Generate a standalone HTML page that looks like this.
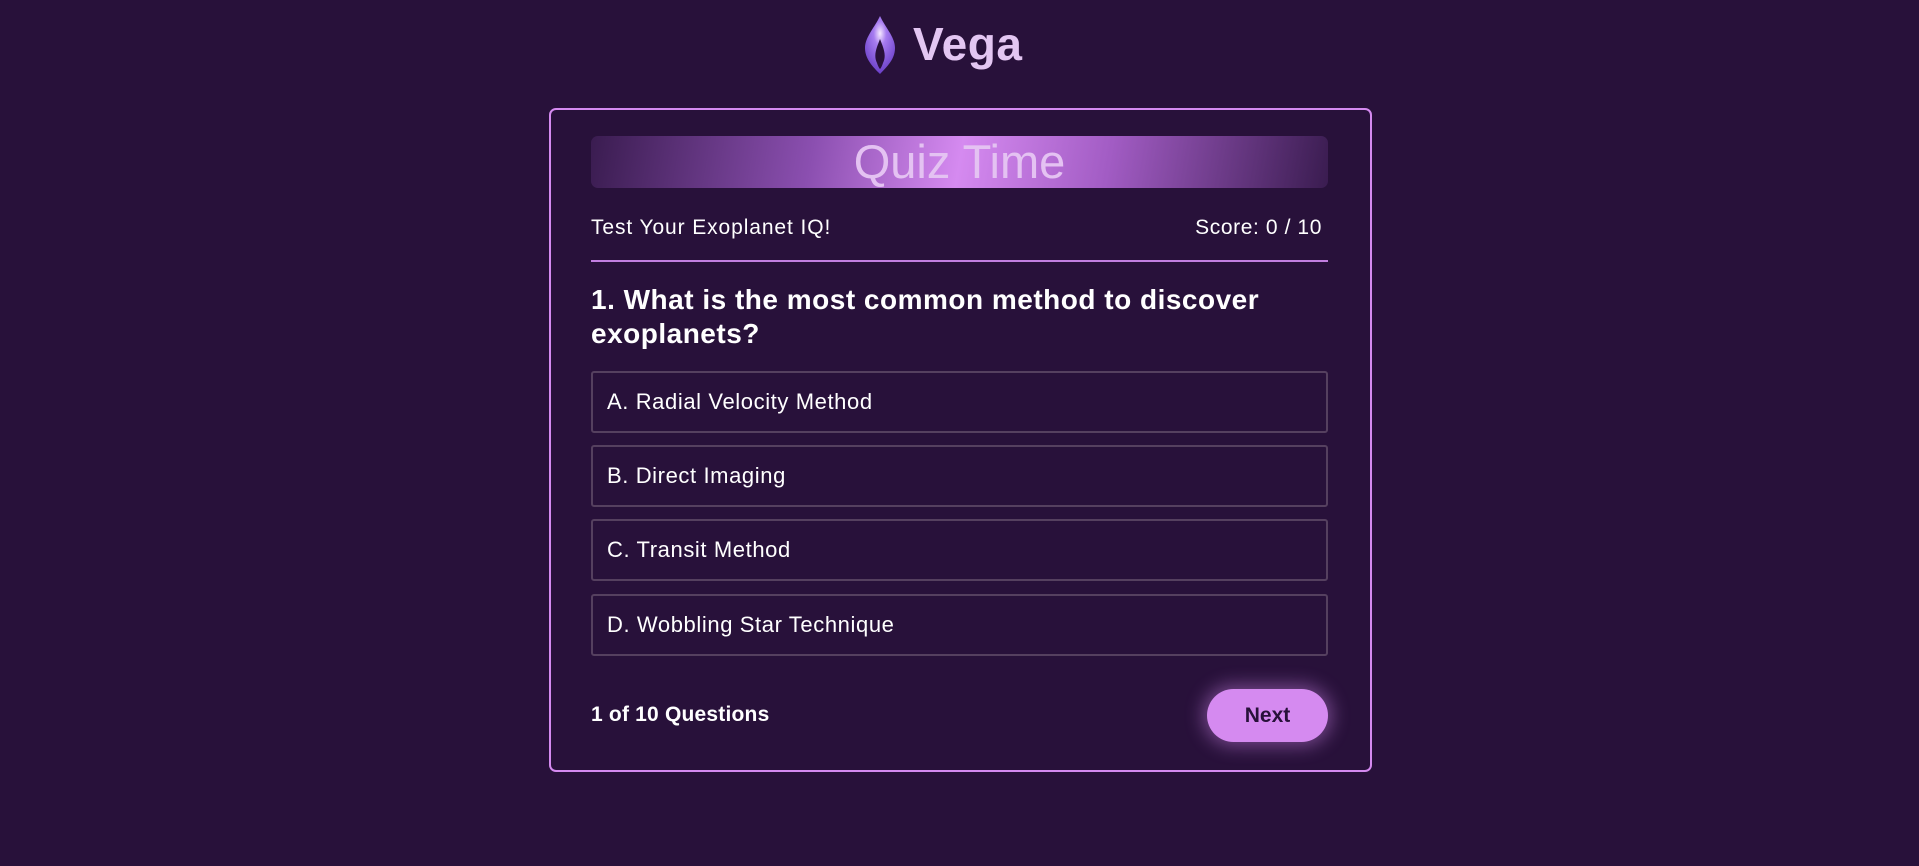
<!DOCTYPE html>
<html><head><meta charset="utf-8"><style>
*{box-sizing:border-box;margin:0;padding:0}
body{width:1919px;height:866px;background:#28113a;font-family:"Liberation Sans",sans-serif;color:#fff;position:relative;overflow:hidden}
.abs{position:absolute}
.card{left:549px;top:108px;width:823px;height:664px;border:2px solid #d58af0;border-radius:7px}
.banner{left:591px;top:136px;width:737px;height:52px;border-radius:7px;background:linear-gradient(100deg,#3a1c50 0%,#8b4fb0 30%,#d58af0 50%,#a25cc4 70%,#3a1c50 100%);text-align:center;font-size:47px;line-height:52px;color:#e4c2f2}
.opt{left:591px;width:737px;height:62px;border:2px solid #55405f;border-radius:3px;font-size:22px;line-height:58px;padding-left:14px;letter-spacing:0.6px}
</style></head><body>
<svg class="abs" style="left:863px;top:15px" width="34" height="60" viewBox="0 0 34 60">
<defs><radialGradient id="g" cx="0.5" cy="0.3" r="0.7"><stop offset="0" stop-color="#f5e8ff"/><stop offset="0.3" stop-color="#a77cf0"/><stop offset="1" stop-color="#6a3fc8"/></radialGradient></defs>
<path d="M17 1 C12 12 2 22 2 33 C2 44 10 52 17 59 C24 52 32 44 32 33 C32 22 22 12 17 1 Z M17 24 C20 32 24 40 20 48 C19 51 18 53 17 54 C16 53 15 51 14 48 C10 40 14 32 17 24Z" fill="url(#g)" fill-rule="evenodd"/>
</svg>
<div class="abs" style="left:913px;top:17px;font-size:46px;font-weight:bold;color:#e3c6f2;letter-spacing:0.5px">Vega</div>
<div class="abs card"></div>
<div class="abs banner">Quiz Time</div>
<div class="abs" style="left:591px;top:216px;font-size:21px;letter-spacing:0.9px">Test Your Exoplanet IQ!</div>
<div class="abs" style="right:597px;top:216px;font-size:21px;letter-spacing:0.6px">Score: 0 / 10</div>
<div class="abs" style="left:591px;top:260px;width:737px;height:2px;background:#c27fe0"></div>
<div class="abs" style="left:591px;top:283px;width:760px;font-size:28px;font-weight:bold;line-height:34px;letter-spacing:0.5px">1. What is the most common method to discover exoplanets?</div>
<div class="abs opt" style="top:371px">A. Radial Velocity Method</div>
<div class="abs opt" style="top:445px">B. Direct Imaging</div>
<div class="abs opt" style="top:519px">C. Transit Method</div>
<div class="abs opt" style="top:594px">D. Wobbling Star Technique</div>
<div class="abs" style="left:591px;top:703px;font-size:21px;font-weight:bold;letter-spacing:0.2px">1 of 10 Questions</div>
<div class="abs" style="left:1207px;top:689px;width:121px;height:53px;border-radius:27px;background:#d58af0;box-shadow:0 0 18px 4px rgba(213,138,240,0.45);color:#28113a;font-weight:bold;font-size:21px;text-align:center;line-height:53px">Next</div>
</body></html>
